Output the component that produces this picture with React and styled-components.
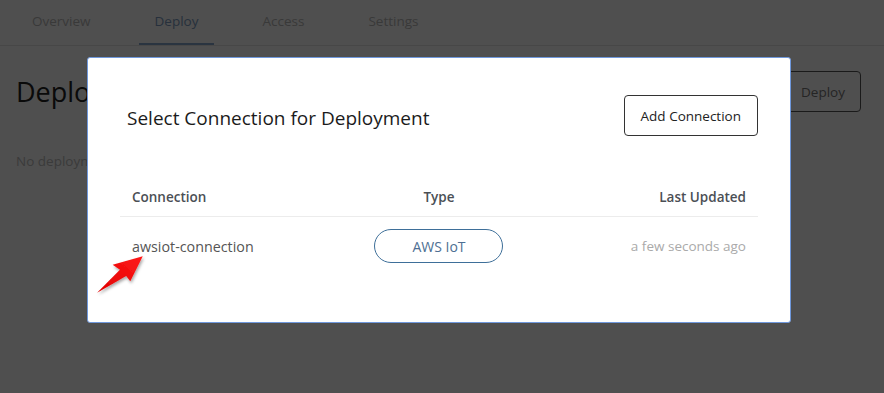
import React from "react";
import styled, { createGlobalStyle } from "styled-components";

const Global = createGlobalStyle`
  html, body { margin: 0; padding: 0; background: #fff; }
  body { font-family: "Segoe UI", "Open Sans", "Noto Sans", sans-serif; }
  * { box-sizing: border-box; }
`;

const Page = styled.div`
  position: relative;
  width: 884px;
  height: 393px;
  overflow: hidden;
  background: #fff;
`;

const Tabs = styled.nav`
  display: flex;
  gap: 32px;
  padding: 0 16px;
  height: 46px;
  border-bottom: 1px solid #e6e6e6;
`;

const Tab = styled.div`
  display: flex;
  align-items: center;
  padding: 0 16px 2px;
  font-size: 13.5px;
  color: ${(p) => (p.$active ? "#7d9cc2" : "#b8b8b8")};
  border-bottom: 2px solid ${(p) => (p.$active ? "#88a8ce" : "transparent")};
`;

const Content = styled.div`
  padding: 25px 23px 0 16px;
`;

const HeaderRow = styled.div`
  display: flex;
  justify-content: space-between;
  align-items: center;
`;

const Heading = styled.h1`
  margin: 0;
  font-weight: 400;
  font-size: 27px;
  color: #222;
`;

const OutlineButton = styled.button`
  height: 41px;
  padding: 0 ${(p) => p.$px || 16}px;
  background: #fff;
  border: 1px solid ${(p) => p.$border || "#333"};
  border-radius: 4px;
  font-family: inherit;
  font-size: 13.5px;
  color: ${(p) => p.$color || "#222"};
`;

const Empty = styled.p`
  margin: 40px 0 0;
  font-size: 13.5px;
  color: #bdbdbd;
`;

const Overlay = styled.div`
  position: absolute;
  inset: 0;
  background: rgba(0, 0, 0, 0.69);
`;

const Modal = styled.div`
  position: absolute;
  left: 87px;
  top: 57px;
  width: 704px;
  height: 266px;
  background: #fff;
  border: 1px solid #6f98dc;
  border-radius: 3px;
  padding: 37px 32px 0;
`;

const ModalHead = styled.div`
  display: flex;
  justify-content: space-between;
  align-items: center;
`;

const ModalTitle = styled.h2`
  margin: 4px 0 0 7px;
  font-weight: 400;
  font-size: 19px;
  color: #1b1b1b;
`;

const Table = styled.div`
  margin-top: 43px;
`;

const Row = styled.div`
  display: grid;
  grid-template-columns: 1fr 1fr 1fr;
  align-items: center;
  padding: ${(p) => (p.$head ? "9px 12px 10px" : "12px 12px")};
  border-bottom: ${(p) => (p.$head ? "1px solid #ececec" : "none")};
`;

const Cell = styled.div`
  font-size: ${(p) => p.$size || 13.5}px;
  font-weight: ${(p) => (p.$head ? 600 : 400)};
  color: ${(p) => p.$color || (p.$head ? "#4b4f55" : "#555")};
  display: flex;
  justify-content: ${(p) =>
    p.$align === "center" ? "center" : p.$align === "right" ? "flex-end" : "flex-start"};
`;

const Pill = styled.span`
  display: inline-flex;
  align-items: center;
  justify-content: center;
  width: 129px;
  height: 34px;
  border: 1px solid #3e6f99;
  border-radius: 17px;
  font-size: 14px;
  color: #4d6f93;
`;

const Arrow = styled.svg`
  position: absolute;
  left: 6px;
  top: 193px;
  width: 56px;
  height: 46px;
  overflow: visible;
`;

export default function App() {
  return (
    <Page>
      <Global />
      <Tabs>
        <Tab>Overview</Tab>
        <Tab $active>Deploy</Tab>
        <Tab>Access</Tab>
        <Tab>Settings</Tab>
      </Tabs>
      <Content>
        <HeaderRow>
          <Heading>Deployments</Heading>
          <OutlineButton $px={15} $border="#555" $color="#777">Deploy</OutlineButton>
        </HeaderRow>
        <Empty>No deployments yet.</Empty>
      </Content>
      <Overlay />
      <Modal>
        <ModalHead>
          <ModalTitle>Select Connection for Deployment</ModalTitle>
          <OutlineButton>Add Connection</OutlineButton>
        </ModalHead>
        <Table>
          <Row $head>
            <Cell $head>Connection</Cell>
            <Cell $head $align="center">Type</Cell>
            <Cell $head $align="right">Last Updated</Cell>
          </Row>
          <Row>
            <Cell $size={14.3}>awsiot-connection</Cell>
            <Cell $align="center">
              <Pill>AWS IoT</Pill>
            </Cell>
            <Cell $align="right" $color="#aaa">a few seconds ago</Cell>
          </Row>
        </Table>
        <Arrow viewBox="0 0 54 44">
          <defs>
            <linearGradient id="ag" x1="0" y1="1" x2="1" y2="0">
              <stop offset="0" stopColor="#e00000" />
              <stop offset="1" stopColor="#ff1a1a" />
            </linearGradient>
            <filter id="as" x="-30%" y="-30%" width="160%" height="160%">
              <feDropShadow dx="1" dy="2" stdDeviation="1.5" floodColor="#000" floodOpacity="0.35" />
            </filter>
          </defs>
          <polygon
            points="47,5 35,29 31,24 3,40 25,18 18,13"
            fill="url(#ag)"
            filter="url(#as)"
          />
        </Arrow>
      </Modal>
    </Page>
  );
}
